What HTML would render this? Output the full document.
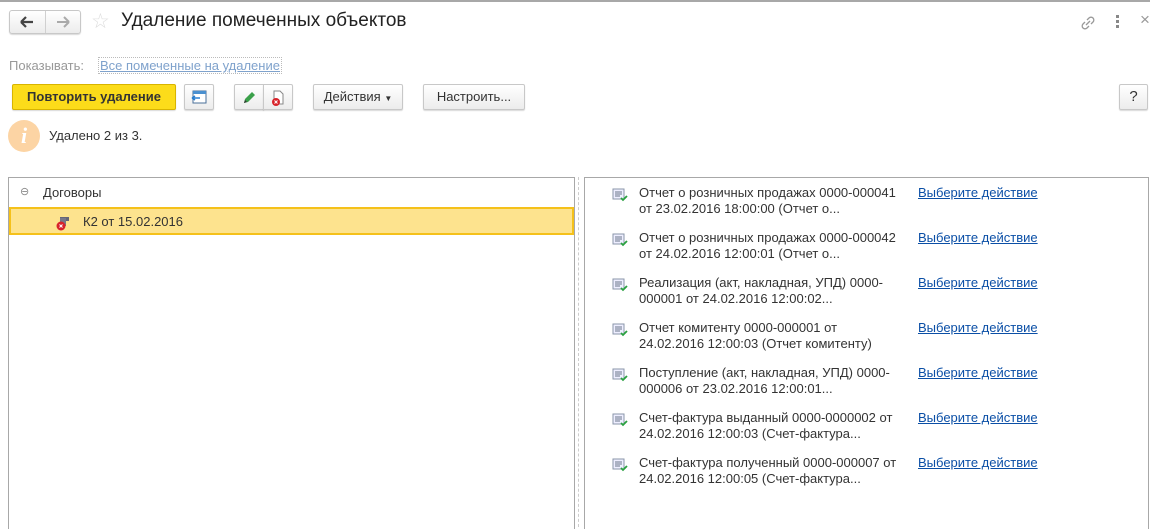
<!DOCTYPE html>
<html><head><meta charset="utf-8"><style>
*{box-sizing:border-box}
html,body{margin:0;width:1150px;height:529px;overflow:hidden}
body{background:#fff;font-family:"Liberation Sans",Arial,sans-serif;font-size:13px;color:#333;position:relative}
.a{position:absolute}
.btn{position:absolute;height:26px;border:1px solid #c8c8c8;border-radius:2px;background:linear-gradient(#fff,#ececec);box-shadow:0 1px 1px rgba(0,0,0,.15);font-size:13px;color:#333;text-align:center;line-height:24px}
.link{color:#0b4fa6;text-decoration:underline}
.it{position:absolute;left:639px;line-height:16px;width:275px}
.ic{position:absolute;left:612px}
</style></head><body>
<div class="a" style="left:0;top:0;width:1150px;height:2px;background:#a8a8a8"></div>
<div class="btn" style="left:9px;top:10px;width:72px;height:24px;border-radius:3px"></div>
<div class="a" style="left:45px;top:11px;width:1px;height:22px;background:#d0d0d0"></div>
<svg class="a" style="left:19px;top:15px" width="16" height="14"><path d="M2 7h12M2 7l5-5M2 7l5 5" stroke="#444" stroke-width="2.2" fill="none"/></svg>
<svg class="a" style="left:55px;top:15px" width="16" height="14"><path d="M14 7H2M14 7l-5-5M14 7l-5 5" stroke="#aaa" stroke-width="2" fill="none"/></svg>
<div class="a" style="left:91px;top:9px;font-size:21px;color:#ddd">☆</div>
<div class="a" style="left:121px;top:10px;font-size:19px;color:#222">Удаление помеченных объектов</div>
<svg class="a" style="left:1079px;top:14px" width="18" height="18" viewBox="0 0 18 18"><g fill="none" stroke="#999" stroke-width="1.3"><path d="M7 11l4-4"/><path d="M8 6l2-2a2.8 2.8 0 0 1 4 4l-2 2"/><path d="M10 12l-2 2a2.8 2.8 0 0 1-4-4l2-2"/></g></svg>
<div class="a" style="left:1116px;top:15px;width:3px;height:3px;background:#888;box-shadow:0 5px #888,0 10px #888"></div>
<div class="a" style="left:1140px;top:10px;font-size:17px;color:#999">×</div>
<div class="a" style="left:9px;top:58px;color:#999">Показывать:</div>
<div class="a" style="left:98px;top:57px;border:1px dotted #bbb;padding:0 1px;color:#7fa2cc;text-decoration:underline">Все помеченные на удаление</div>
<div class="btn" style="left:12px;top:84px;width:164px;background:#fcdc1a;border-color:#d8b400;font-weight:bold;color:#333">Повторить удаление</div>
<div class="btn" style="left:184px;top:84px;width:30px"><svg style="margin-top:5px" width="16" height="14"><rect x="2" y="1" width="13" height="12" fill="#fff" stroke="#4a6f99"/><rect x="2" y="1" width="13" height="3" fill="#4a90d0"/><path d="M1 8h8M1 8l3-2M1 8l3 2" stroke="#2a7fd0" stroke-width="1.5" fill="none"/></svg></div>
<div class="btn" style="left:234px;top:84px;width:30px;border-radius:2px 0 0 2px"><svg style="margin-top:5px" width="16" height="16"><path d="M3 13l1-4 7-7 3 3-7 7z" fill="#3aa04a"/><path d="M3 13l1-3 2 2z" fill="#333"/></svg></div>
<div class="btn" style="left:263px;top:84px;width:30px;border-radius:0 2px 2px 0"><svg style="margin-top:5px" width="16" height="16"><path d="M4 1h6l3 3v10H4z" fill="#fff" stroke="#888"/><circle cx="6" cy="12" r="4" fill="#d8232a"/><path d="M4.5 10.5l3 3M7.5 10.5l-3 3" stroke="#fff"/></svg></div>
<div class="btn" style="left:313px;top:84px;width:90px">Действия <span style="font-size:8px">▼</span></div>
<div class="btn" style="left:423px;top:84px;width:102px">Настроить...</div>
<div class="btn" style="left:1119px;top:84px;width:29px;font-size:15px">?</div>
<div class="a" style="left:8px;top:120px;width:32px;height:32px;border-radius:50%;background:#fcd4a4;color:#fff;font:bold italic 22px 'Liberation Serif',serif;text-align:center;line-height:32px">i</div>
<div class="a" style="left:49px;top:128px;color:#333">Удалено 2 из 3.</div>
<div class="a" style="left:8px;top:177px;width:567px;height:360px;border:1px solid #a8a8a8"></div>
<div class="a" style="left:578px;top:177px;height:360px;border-left:1px dashed #ccc"></div>
<div class="a" style="left:584px;top:177px;width:565px;height:360px;border:1px solid #a8a8a8"></div>
<div class="a" style="left:20px;top:185px;color:#888;font-size:11px">⊖</div>
<div class="a" style="left:43px;top:185px;color:#333">Договоры</div>
<div class="a" style="left:9px;top:207px;width:565px;height:28px;background:#fde38e;border:2px solid #f5c11a"></div>
<svg class="a" style="left:55px;top:216px" width="16" height="16"><rect x="5" y="1" width="9" height="4" fill="#667"/><rect x="5" y="2" width="6" height="8" fill="#778"/><circle cx="6" cy="10" r="4.5" fill="#d8232a"/><path d="M4.5 8.5l3 3M7.5 8.5l-3 3" stroke="#fff"/></svg>
<div class="a" style="left:83px;top:214px;color:#333">К2 от 15.02.2016</div>
<div id="r"></div>
<script>
var d=[["Отчет о розничных продажах 0000-000041","от 23.02.2016 18:00:00 (Отчет о..."],["Отчет о розничных продажах 0000-000042","от 24.02.2016 12:00:01 (Отчет о..."],["Реализация (акт, накладная, УПД) 0000-","000001 от 24.02.2016 12:00:02..."],["Отчет комитенту 0000-000001 от","24.02.2016 12:00:03 (Отчет комитенту)"],["Поступление (акт, накладная, УПД) 0000-","000006 от 23.02.2016 12:00:01..."],["Счет-фактура выданный 0000-0000002 от","24.02.2016 12:00:03 (Счет-фактура..."],["Счет-фактура полученный 0000-000007 от","24.02.2016 12:00:05 (Счет-фактура..."]];
var h="";d.forEach(function(x,i){var y=185+i*45;
h+='<svg class="ic" style="top:'+(y+3)+'px" width="16" height="14"><rect x="1" y="1" width="11" height="10" fill="#eef" stroke="#8a96a8"/><path d="M3 4h7M3 6h7M3 8h5" stroke="#6a7688"/><path d="M9 10l2 2 4-4" stroke="#2aa040" stroke-width="1.8" fill="none"/></svg>';
h+='<div class="it" style="top:'+y+'px">'+x[0]+'<br>'+x[1]+'</div>';
h+='<div class="a link" style="left:918px;top:'+y+'px;line-height:16px">Выберите действие</div>';});
document.getElementById("r").outerHTML=h;
</script>
</body></html>
